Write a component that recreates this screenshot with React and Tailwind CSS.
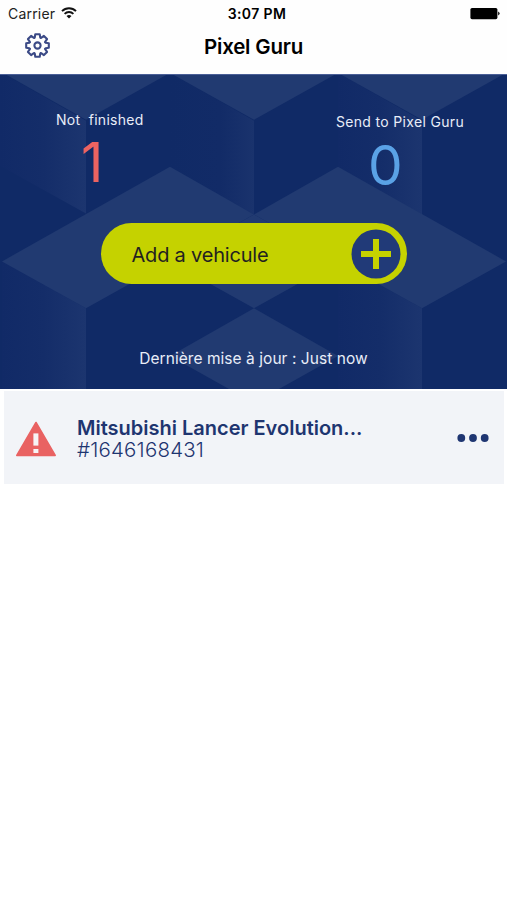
function GearIcon() {
    const teeth = [0, 45, 90, 135, 180, 225, 270, 315];

    return (
        <svg viewBox="-13.5 -13.5 28 28" className="-mt-[3px] w-7 h-7" fill="none" stroke="#3b4a86" strokeWidth="2.1" strokeLinejoin="round">
            {teeth.map((angle) => (
                <path
                    key={angle}
                    transform={`rotate(${angle})`}
                    d="M-3.2 -7.7L-2.7 -8.3L-2.2 -11.3H2.2L2.7 -8.3L3.2 -7.7"
                    strokeLinecap="round"
                />
            ))}
            <circle r="3.1" />
        </svg>
    );
}

function WifiIcon() {
    return (
        <svg viewBox="0 0 16 12" className="-mt-0.5 w-4 h-3" fill="none" stroke="#111" strokeWidth="1.9">
            <path d="M1 4.1A10 10 0 0 1 15 4.1" />
            <path d="M3.6 6.9A6.2 6.2 0 0 1 12.4 6.9" />
            <path d="M8 11.6L5.5 9.1A3.6 3.6 0 0 1 10.5 9.1Z" fill="#111" stroke="none" />
        </svg>
    );
}

function BatteryIcon() {
    return (
        <svg viewBox="0 0 30 12" className="w-[30px] h-3">
            <rect x="0.4" y="0" width="27" height="11.2" rx="1.6" fill="#000" />
            <path d="M28.2 3.6Q31 5.6 28.2 7.6Z" fill="#000" />
        </svg>
    );
}

function WarningIcon() {
    return (
        <svg viewBox="0 0 42 36" className="mt-0.5 w-[42px] h-9">
            <path d="M21 1.5L40.2 34.4H1.8Z" fill="#e96262" stroke="#e96262" strokeWidth="1.6" strokeLinejoin="round" />
            <rect x="18.4" y="12.4" width="5" height="12.2" fill="#f7f3f5" />
            <rect x="18.4" y="28" width="5" height="4" fill="#f7f3f5" />
        </svg>
    );
}

function CubesBackground() {
    return (
        <svg viewBox="0 74 507 315" preserveAspectRatio="none" className="absolute inset-0 w-full h-full">
            <defs>
                <linearGradient id="side">
                    <stop offset="0" stopColor="#112a67" />
                    <stop offset="0.5" stopColor="#142d69" />
                    <stop offset="1" stopColor="#1c356f" />
                </linearGradient>
                <linearGradient id="sideSoft">
                    <stop offset="0" stopColor="#102a66" />
                    <stop offset="0.6" stopColor="#122b67" />
                    <stop offset="1" stopColor="#1a336d" />
                </linearGradient>
            </defs>
            <rect y="74" width="507" height="315" fill="#102a66" />
            {/* left faces */}
            <path d="M0 71L86 120V213L0 165Z" fill="url(#side)" />
            <path d="M170 72L254 120V214L170 166Z" fill="url(#sideSoft)" />
            <path d="M338 72L422 120V214L338 166Z" fill="url(#side)" />
            <path d="M2 261L86 308V389H2Z" fill="url(#side)" />
            <path d="M338 261L422 308V389H338Z" fill="url(#side)" />
            {/* top faces */}
            <g fill="#213a71">
                <path d="M5 73L86 119L168 73Z" />
                <path d="M172 73L254 119L336 73Z" />
                <path d="M340 73L422 119L504 73Z" />
                <path d="M2 261L170 166L254 214L86 308Z" />
                <path d="M506 261L338 166L254 214L422 308Z" />
                <path d="M254 214L338 261L254 308L170 261Z" />
                <path d="M254 308L338 356L254 403L170 356Z" />
            </g>
        </svg>
    );
}

function Header() {
    return (
        <header className="h-[74px] bg-[#fefefe] text-black">
            <div className="h-[27px] grid grid-cols-3 items-center pl-2 pr-[7px]">
                <div className="flex items-center gap-1.5 text-[14px] tracking-[0.2px] text-[#222]">
                    <span>Carrier</span>
                    <WifiIcon />
                </div>
                <div className="pl-1.5 text-center text-[14px] font-semibold tracking-[0.4px] whitespace-nowrap">3:07 PM</div>
                <div className="flex justify-end">
                    <BatteryIcon />
                </div>
            </div>
            <div className="h-[41px] grid grid-cols-3 items-center pl-6">
                <GearIcon />
                <h1 className="-ml-6 text-center text-[20.5px] font-semibold tracking-[-0.2px]">Pixel Guru</h1>
            </div>
        </header>
    );
}

function Banner() {
    return (
        <section className="relative h-[315px] overflow-hidden border-t border-[#4a5f97]">
            <CubesBackground />
            <div className="relative flex flex-col items-center text-[#e8edf8]">
                <div className="w-full h-[148px] flex justify-between pl-14 pr-[43px]">
                    <div className="pt-[35px]">
                        <div className="text-[14px] leading-5 whitespace-pre tracking-[0.27px]">Not  finished</div>
                        <div className="pt-[4px] pl-[25px] text-[55px] leading-[56px] font-normal text-[#ec6361]">1</div>
                    </div>
                    <div className="pt-[37px]">
                        <div className="text-[14px] leading-5 tracking-[0.33px]">Send to Pixel Guru</div>
                        <div className="pt-[5px] pl-8 text-[55px] leading-[56px] font-normal text-[#5aa2e6]">0</div>
                    </div>
                </div>
                <button className="w-[306px] h-[61px] rounded-full bg-[#c5d200] flex items-center justify-between pl-[31px] pr-1.5">
                    <span className="pt-0.5 text-[20px] tracking-[-0.2px] text-[#231f20]">Add a vehicule</span>
                    <svg viewBox="0 0 50 50" className="w-[50px] h-[50px]">
                        <circle cx="25" cy="25" r="24.5" fill="#213a78" />
                        <path d="M10 25H40M25 10V40" stroke="#c5d200" strokeWidth="6" />
                    </svg>
                </button>
                <p className="pt-[65px] text-[15.5px] leading-5 tracking-[0.05px]">Dernière mise à jour : Just now</p>
            </div>
        </section>
    );
}

function VehicleRow({ name, number }) {
    return (
        <div className="mt-0.5 ml-1 mr-[3px] h-[93px] bg-[#f2f4f8] flex items-center pl-[11px] pr-[15px]">
            <WarningIcon />
            <div className="ml-5 pt-0.5 flex-1 text-[#1e3570]">
                <div className="text-[20px] leading-[22px] font-semibold">{name}</div>
                <div className="text-[20.5px] leading-[22px] font-light tracking-[0.2px]">{number}</div>
            </div>
            <svg viewBox="0 0 32 8" className="mt-px w-8 h-2" fill="#1f3672">
                <circle cx="4.3" cy="4" r="3.9" />
                <circle cx="16" cy="4" r="3.9" />
                <circle cx="27.7" cy="4" r="3.9" />
            </svg>
        </div>
    );
}

function App() {
    return (
        <div className="w-full min-h-screen bg-white font-[Inter,sans-serif]">
            <Header />
            <Banner />
            <VehicleRow name="Mitsubishi Lancer Evolution..." number="#1646168431" />
        </div>
    );
}

export default App;
